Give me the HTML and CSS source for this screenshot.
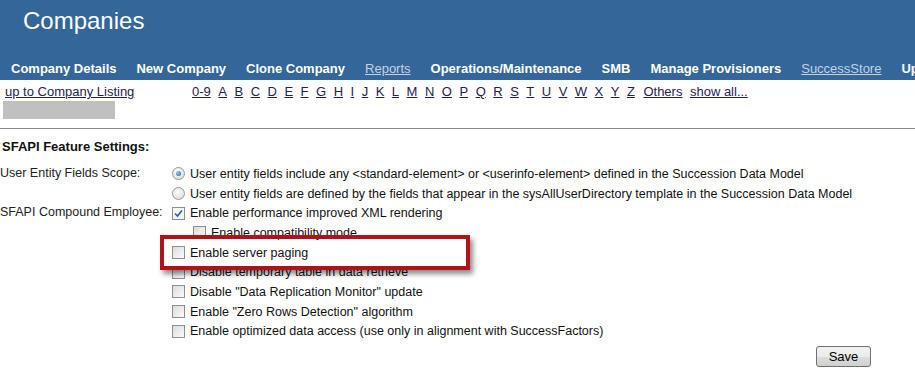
FILE: index.html
```html
<!DOCTYPE html>
<html lang="en">
<head>
  <meta charset="UTF-8">
  <title>Companies</title>
  <link rel="stylesheet" href="styles.css">
</head>
<body>
  <div id="header">
    <h1>Companies</h1>
    <ul class="nav">
      <li><a href="#">Company Details</a></li>
      <li><a href="#">New Company</a></li>
      <li><a href="#">Clone Company</a></li>
      <li><a href="#" class="off">Reports</a></li>
      <li><a href="#">Operations/Maintenance</a></li>
      <li><a href="#">SMB</a></li>
      <li><a href="#">Manage Provisioners</a></li>
      <li><a href="#" class="off">SuccessStore</a></li>
      <li><a href="#">Up</a></li>
    </ul>
  </div>

  <div class="listing">
    <a href="#" class="back">up to Company Listing</a>
    <div class="letters">
      <a href="#">0-9</a><a href="#">A</a><a href="#">B</a><a href="#">C</a><a href="#">D</a><a href="#">E</a><a href="#">F</a><a href="#">G</a><a href="#">H</a><a href="#">I</a><a href="#">J</a><a href="#">K</a><a href="#">L</a><a href="#">M</a><a href="#">N</a><a href="#">O</a><a href="#">P</a><a href="#">Q</a><a href="#">R</a><a href="#">S</a><a href="#">T</a><a href="#">U</a><a href="#">V</a><a href="#">W</a><a href="#">X</a><a href="#">Y</a><a href="#">Z</a><a href="#">Others</a><a href="#">show all...</a>
    </div>
  </div>
  <div class="company-name"></div>
  <hr>

  <div class="settings">
    <h2>SFAPI Feature Settings:</h2>
    <div class="grid">
      <div class="label">User Entity Fields Scope:</div>
      <div class="opts">
        <div class="opt"><span class="radio on"></span>User entity fields include any &lt;standard-element&gt; or &lt;userinfo-element&gt; defined in the Succession Data Model</div>
        <div class="opt"><span class="radio"></span>User entity fields are defined by the fields that appear in the sysAllUserDirectory template in the Succession Data Model</div>
      </div>

      <div class="label">SFAPI Compound Employee:</div>
      <div class="opts">
        <div class="opt"><span class="check on"><svg viewBox="0 0 9 9" width="9" height="9"><path d="M1 4.5 L3.5 7 L8 1.5" fill="none" stroke="#2a5aa8" stroke-width="1.6"/></svg></span>Enable performance improved XML rendering</div>
        <div class="opt sub"><span class="check"></span>Enable compatibility mode</div>
        <div class="opt"><span class="check"></span>Enable server paging</div>
        <div class="opt"><span class="check"></span>Disable temporary table in data retrieve</div>
        <div class="opt"><span class="check"></span>Disable "Data Replication Monitor" update</div>
        <div class="opt"><span class="check"></span>Enable "Zero Rows Detection" algorithm</div>
        <div class="opt"><span class="check"></span>Enable optimized data access (use only in alignment with SuccessFactors)</div>
        <div class="highlight"></div>
      </div>
    </div>
    <div class="actions"><button>Save</button></div>
  </div>
</body>
</html>
```

FILE: styles.css
```css
body {
  margin: 0;
  background: #fff;
  font-family: "Liberation Sans", Arial, sans-serif;
  font-size: 12.5px;
  color: #111;
  overflow: hidden;
}

#header {
  background: #346699;
  height: 80px;
  overflow: hidden;
}

#header h1 {
  margin: 0;
  padding: 7px 0 0 23px;
  height: 49px;
  box-sizing: border-box;
  font-size: 24px;
  font-weight: normal;
  color: #fff;
  line-height: 28px;
}

.nav {
  list-style: none;
  margin: 0;
  padding: 0 0 0 11px;
  display: flex;
  gap: 20px;
  white-space: nowrap;
  line-height: 40px;
}

.nav a {
  color: #fff;
  font-weight: bold;
  font-size: 13px;
  text-decoration: none;
}

.nav a.off {
  color: #c5d2e2;
  font-weight: normal;
  text-decoration: underline;
}

.listing {
  display: flex;
  font-size: 13px;
  line-height: 18px;
  padding-top: 3px;
}

.listing a {
  color: #1c2552;
}

.back {
  margin-left: 5px;
  width: 187px;
}

.letters {
  display: flex;
  gap: 7.5px;
}

.letters a:nth-last-child(2) {
  margin-left: 1px;
}

.company-name {
  background: #c0c0c0;
  width: 112px;
  height: 18px;
  margin: 0 0 0 3px;
}

hr {
  border: none;
  border-top: 1px solid #8a8a8a;
  margin: 9px 0 0;
}

.settings {
  padding: 0 0 0 2px;
}

h2 {
  margin: 0;
  font-size: 13px;
  line-height: 20px;
  padding-top: 8px;
  height: 35px;
  box-sizing: border-box;
}

.grid {
  display: grid;
  grid-template-columns: 170px auto;
}

.label {
  line-height: 19.7px;
  margin-left: -2px;
  color: #222;
}

.opts {
  position: relative;
}

.opt {
  display: flex;
  align-items: center;
  height: 19.7px;
  white-space: nowrap;
}

.opt.sub {
  padding-left: 21px;
}

.check, .radio {
  width: 11px;
  height: 11px;
  border: 1px solid #8f8f8f;
  background: linear-gradient(135deg, #dcdcdc, #fbfbfb);
  margin-right: 5px;
  flex: none;
  display: flex;
  align-items: center;
  justify-content: center;
}

.check.on {
  background: #f4f4f4;
}

.radio {
  border-radius: 50%;
  border-color: #9a9a9a;
  background: radial-gradient(circle at 40% 35%, #fdfdfd, #d6d6d6);
}

.radio.on::after {
  content: "";
  width: 5px;
  height: 5px;
  border-radius: 50%;
  background: radial-gradient(circle at 35% 35%, #8fd0f5, #1b5f98);
}

.highlight {
  position: absolute;
  left: -12px;
  top: 32px;
  width: 302px;
  height: 27px;
  border: 4px solid #b0121b;
  box-shadow: 3px 4px 5px rgba(0, 0, 0, 0.45);
}

.actions {
  display: flex;
  justify-content: flex-end;
  padding: 5px 44px 0 0;
}

button {
  font-family: "Liberation Sans", Arial, sans-serif;
  font-size: 13px;
  width: 55px;
  height: 21px;
  padding: 0;
  border: 1px solid #707070;
  border-radius: 3px;
  background: linear-gradient(#f2f2f2, #ebebeb 50%, #dddddd 51%, #cfcfcf);
  color: #000;
}
```
